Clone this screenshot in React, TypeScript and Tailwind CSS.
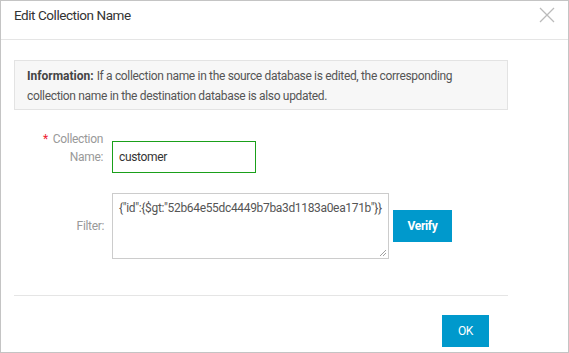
import React from "react";

const font = { fontFamily: "Roboto, 'Liberation Sans', sans-serif" };

export default function App() {
  return (
    <div
      className="w-[569px] h-[353px] bg-white border border-[#c4c4c4] flex flex-col text-[#333] tracking-[-0.33px]"
      style={font}
    >
      <div className="h-[39px] shrink-0 border-b border-[#e5e5e5] flex items-center justify-between pl-[13px] pr-[13px]">
        <span className="text-[13.5px] tracking-[-0.45px] -mt-[10px]">Edit Collection Name</span>
        <svg width="16" height="16" viewBox="0 0 16 16" className="-mt-[10px]">
          <path d="M1 1L15 15M15 1L1 15" stroke="#bbb" strokeWidth="1.3" />
        </svg>
      </div>

      <div className="pl-[13px] pr-[60px] pt-[20px] flex flex-col">
        <div className="h-[50px] bg-[#f7f7f7] border border-[#e3e3e3] px-[12px] py-[5px] text-[12px] leading-[20px] text-[#555]">
          <p>
            <span className="font-bold text-[#444] tracking-normal mr-[3px]">Information:</span>
            <span>If a collection name in the source database is edited, the corresponding</span>
          </p>
          <p>collection name in the destination database is also updated.</p>
        </div>

        <div className="flex mt-[31px]">
          <div className="w-[90px] text-right text-[12px] leading-[18px] text-[#999] pr-[1px] -mt-[11px]">
            <p>
              <span className="text-[#e23] mr-[5px]">*</span>Collection
            </p>
            <p>Name:</p>
          </div>
          <div className="ml-[8px] w-[144px] h-[32px] border border-[#1aa01a] flex items-center px-[6px] text-[12px] text-[#333]">
            customer
          </div>
        </div>

        <div className="flex items-center mt-[20px]">
          <div className="w-[90px] text-right text-[12px] text-[#999]">Filter:</div>
          <div className="ml-[8px] w-[277px] h-[66px] border border-[#ccc] relative px-[6px] pt-[5px] text-[12px] text-[#555] whitespace-nowrap overflow-hidden">
            {'{"id":{$gt:"52b64e55dc4449b7ba3d1183a0ea171b"}}'}
            <svg width="8" height="8" viewBox="0 0 8 8" className="absolute right-[1px] bottom-[1px]">
              <path d="M7 1L1 7M7 4L4 7" stroke="#888" strokeWidth="0.8" />
            </svg>
          </div>
          <button className="ml-[4px] w-[59px] h-[32px] bg-[#0099cc] text-white text-[12px] font-bold">
            Verify
          </button>
        </div>

        <div className="mt-[36px] border-t border-[#e5e5e5]" />

        <div className="flex justify-end mt-[19px] pr-[19px]">
          <button className="w-[47px] h-[32px] bg-[#0099cc] text-white text-[12px]">OK</button>
        </div>
      </div>
    </div>
  );
}
